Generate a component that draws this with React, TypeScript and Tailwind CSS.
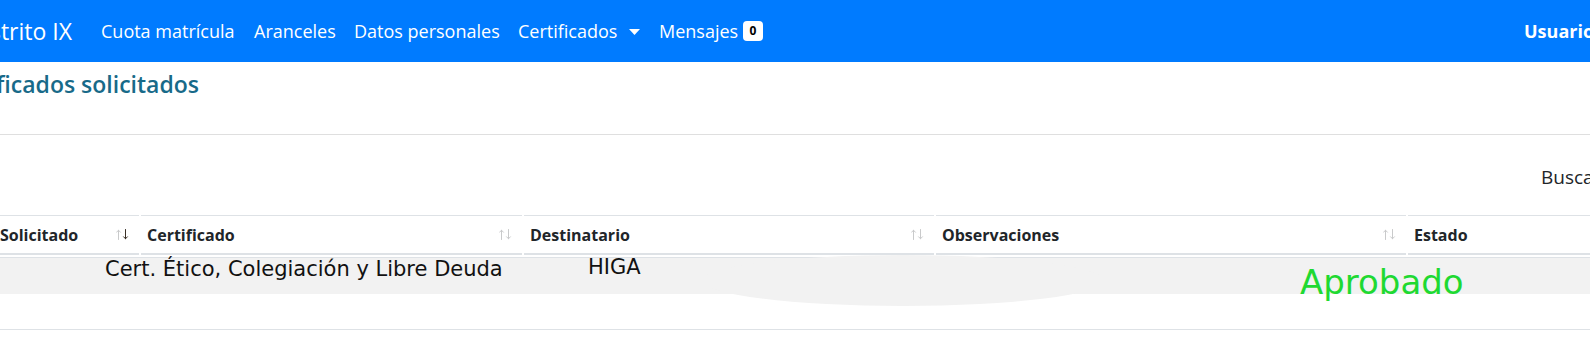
import React from "react";

function SortIcon({ active = false }: { active?: boolean }) {
  return (
    <svg width="13" height="11" viewBox="0 0 13 11" className="shrink-0">
      <g fill="none" strokeWidth="1" strokeLinecap="round" strokeLinejoin="round">
        <g stroke="#c9cacb">
          <path d="M2.5 1.2V10.5" />
          <path d="M0.6 3.2L2.5 1.2L4.4 3.2" />
        </g>
        <g stroke={active ? "#3a3026" : "#c9cacb"}>
          <path d="M9.5 0.5V9.8" />
          <path d="M7.6 7.8L9.5 9.8L11.4 7.8" />
        </g>
      </g>
    </svg>
  );
}

function HeadCell({
  label,
  className,
  icon = true,
  active = false,
}: {
  label: string;
  className: string;
  icon?: boolean;
  active?: boolean;
}) {
  return (
    <div
      className={
        "h-[40px] border-t border-b-2 border-t-[#dee2e6] border-b-[#dee2e6] flex items-center justify-between pr-[10px] shrink-0 " +
        className
      }
    >
      <span className="font-bold text-[16px] text-[#212529] whitespace-nowrap">{label}</span>
      {icon && <SortIcon active={active} />}
    </div>
  );
}

export default function App() {
  return (
    <div
      className="w-[1590px] h-[351px] overflow-hidden bg-white"
      style={{ fontFamily: '"Open Sans", "Noto Sans", sans-serif' }}
    >
      {/* Navbar */}
      <nav className="h-[62px] bg-[#007bff] flex items-center text-white">
        <div className="w-[72px] shrink-0 flex justify-end">
          <span className="shrink-0 whitespace-nowrap text-[23px] leading-none">Distrito IX</span>
        </div>
        <div className="ml-[29px] w-[153px] shrink-0 text-[18px] whitespace-nowrap">Cuota matrícula</div>
        <div className="w-[100px] shrink-0 text-[18px] whitespace-nowrap">Aranceles</div>
        <div className="w-[164px] shrink-0 text-[18px] whitespace-nowrap">Datos personales</div>
        <div className="w-[141px] shrink-0 flex items-center">
          <span className="w-[111px] text-[18px] whitespace-nowrap">Certificados</span>
          <svg width="11" height="6" viewBox="0 0 11 6" className="mt-[1px]">
            <path d="M0 0H11L5.5 6Z" fill="white" />
          </svg>
        </div>
        <div className="shrink-0 flex items-center">
          <span className="w-[84px] text-[18px] whitespace-nowrap">Mensajes</span>
          <span className="w-[20px] h-[20px] rounded-[4px] bg-white text-black text-[12px] font-bold flex items-center justify-center">
            0
          </span>
        </div>
        <div className="flex-1" />
        <div className="w-[66px] shrink-0 whitespace-nowrap font-bold text-[18px]">Usuario</div>
      </nav>

      {/* Title */}
      <div className="h-[72px] pt-[8px]">
        <div className="w-[199px] flex justify-end">
          <h4 className="shrink-0 whitespace-nowrap text-[23px] leading-[28px] font-semibold text-[#186a89]">
            Certificados solicitados
          </h4>
        </div>
      </div>
      <div className="border-t border-[#dfdfdf]" />

      {/* Search */}
      <div className="h-[80px] pt-[29px] pl-[1541px]">
        <span className="whitespace-nowrap text-[19px] leading-[26px] text-[#212529]">Buscar:</span>
      </div>

      {/* Table header */}
      <div className="flex gap-[2px]">
        <HeadCell label="Solicitado" className="w-[139px]" active />
        <HeadCell label="Certificado" className="w-[381px] pl-[6px]" />
        <HeadCell label="Destinatario" className="w-[410px] pl-[6px]" />
        <HeadCell label="Observaciones" className="w-[470px] pl-[6px]" />
        <HeadCell label="Estado" className="flex-1 pl-[6px]" icon={false} />
      </div>

      {/* Row */}
      <div className="relative mt-[2px] h-[37px] border-t border-[#dee2e6] bg-[#f2f2f2]">
        <div className="absolute left-[703px] top-[-3px] w-[400px] h-[51px] rounded-[50%] bg-[#f2f2f2]" />
        <div
          className="relative grid grid-cols-[588px_712px_1fr] text-[#111]"
          style={{ fontFamily: '"DejaVu Sans", Verdana, sans-serif' }}
        >
          <div className="pl-[105px] text-[21px] leading-[22px] whitespace-nowrap">
            Cert. Ético, Colegiación y Libre Deuda
          </div>
          <div className="text-[21px] leading-[18px] whitespace-nowrap">HIGA</div>
          <div className="pt-[4px] text-[34px] leading-[40px] text-[#1fd932] whitespace-nowrap">Aprobado</div>
        </div>
      </div>
      <div className="h-[35px]" />
      <div className="border-t border-[#dee2e6]" />
    </div>
  );
}
